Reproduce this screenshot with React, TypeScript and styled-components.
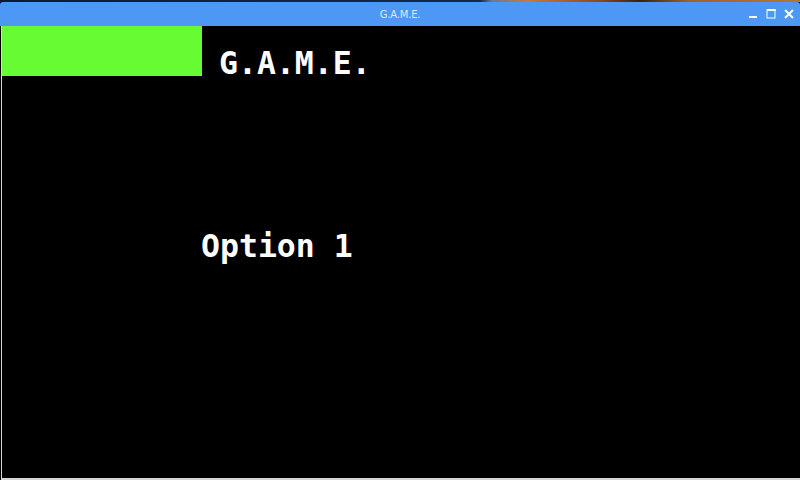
import styled, { createGlobalStyle } from "styled-components";

const GlobalStyle = createGlobalStyle`
  html, body {
    margin: 0;
    padding: 0;
    background: #000;
    overflow: hidden;
  }
`;

const Screen = styled.div`
  width: 800px;
  height: 480px;
  display: flex;
  flex-direction: column;
  background: #000;
`;

const Desktop = styled.div`
  height: 2px;
  flex: none;
  background: linear-gradient(
    90deg,
    #0d1a33 0%,
    #16284a 60%,
    #6b7b92 61.5%,
    #c97a36 66%,
    #8a4a1e 75%,
    #3a2010 80%,
    #a0602a 86%,
    #b77434 100%
  );
`;

const TitleBar = styled.div`
  height: 24px;
  flex: none;
  background: #4d98f5;
  border-radius: 3px 3px 0 0;
  position: relative;
  display: flex;
  align-items: center;
  justify-content: center;
`;

const TitleText = styled.span`
  font-family: "DejaVu Sans", sans-serif;
  font-size: 10px;
  color: #dfe9fb;
  letter-spacing: -0.2px;
`;

const Controls = styled.div`
  position: absolute;
  right: 6px;
  top: 0;
  height: 24px;
  display: flex;
  align-items: center;
  gap: 8px;
`;

const Client = styled.div`
  flex: 1;
  background: #000;
  border-left: 1px solid #000;
  position: relative;
  display: flex;
  flex-direction: column;
  &::before {
    content: "";
    position: absolute;
    left: 0;
    top: 0;
    bottom: 0;
    width: 1px;
    background: #d9d9d9;
  }
  &::after {
    content: "";
    position: absolute;
    left: 0;
    right: 0;
    bottom: 0;
    height: 2px;
    background: #d6d6d6;
  }
`;

const Header = styled.div`
  height: 50px;
  display: flex;
  padding-left: 1px;
`;

const GreenBlock = styled.div`
  width: 200px;
  height: 50px;
  background: #66fb33;
  flex: none;
`;

const GameTitle = styled.h1`
  margin: 0 0 0 17px;
  padding-top: 19px;
  font-family: "DejaVu Sans Mono", monospace;
  font-weight: bold;
  font-size: 31.5px;
  line-height: normal;
  color: #fff;
  white-space: nowrap;
`;

const Menu = styled.div`
  padding: 152px 0 0 200px;
  display: flex;
  flex-direction: column;
`;

const MenuItem = styled.div`
  font-family: "DejaVu Sans Mono", monospace;
  font-weight: bold;
  font-size: 31.5px;
  line-height: normal;
  color: #fff;
`;

function WindowButtons() {
  return (
    <Controls>
      <svg width="10" height="10" viewBox="0 0 10 10">
        <rect x="1" y="7" width="8" height="2" fill="#fff" />
      </svg>
      <svg width="10" height="10" viewBox="0 0 10 10">
        <rect x="1" y="0.5" width="8" height="8.5" fill="none" stroke="#fff" strokeWidth="1" />
        <rect x="1" y="0" width="8.5" height="2" fill="#fff" />
      </svg>
      <svg width="10" height="10" viewBox="0 0 10 10">
        <path d="M1 1 L9 9 M9 1 L1 9" stroke="#fff" strokeWidth="2" />
      </svg>
    </Controls>
  );
}

export default function App() {
  return (
    <>
      <GlobalStyle />
      <Screen>
        <Desktop />
        <TitleBar>
          <TitleText>G.A.M.E.</TitleText>
          <WindowButtons />
        </TitleBar>
        <Client>
          <Header>
            <GreenBlock />
            <GameTitle>G.A.M.E.</GameTitle>
          </Header>
          <Menu>
            <MenuItem>Option 1</MenuItem>
          </Menu>
        </Client>
      </Screen>
    </>
  );
}
